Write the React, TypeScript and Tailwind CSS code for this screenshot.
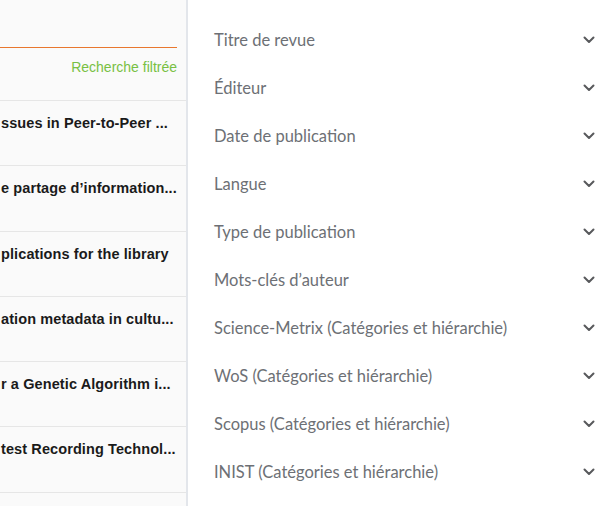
import React from 'react';

const results = [
  'ssues in Peer-to-Peer ...',
  'e partage d’information...',
  'plications for the library',
  'ation metadata in cultu...',
  'r a Genetic Algorithm i...',
  'test Recording Technol...',
];

const filters = [
  'Titre de revue',
  'Éditeur',
  'Date de publication',
  'Langue',
  'Type de publication',
  'Mots-clés d’auteur',
  'Science-Metrix (Catégories et hiérarchie)',
  'WoS (Catégories et hiérarchie)',
  'Scopus (Catégories et hiérarchie)',
  'INIST (Catégories et hiérarchie)',
];

const Chevron = () => (
  <svg width="12" height="8" viewBox="0 0 12 8" fill="none">
    <polyline points="1.5,1.5 6,6 10.5,1.5" stroke="#58595c" strokeWidth="2" strokeLinecap="round" strokeLinejoin="round" />
  </svg>
);

export default function App() {
  return (
    <div className="flex h-[506px] w-[612px] overflow-hidden bg-white">
      <div className="flex w-[188px] shrink-0 flex-col border-r-2 border-[#e3e6eb] bg-[#fafafa] font-['Liberation_Sans',Arial,sans-serif]">
        <div className="h-[101px] shrink-0 border-b border-[#e6e6e6] pr-[9px]">
          <div className="h-[47px]" />
          <div className="h-px bg-[#e8772e]" />
          <div className="pt-[9px] text-right text-[14px] text-[#78c043]">Recherche filtrée</div>
        </div>
        {results.map((title) => (
          <div key={title} className="h-[65.3px] shrink-0 border-b border-[#e6e6e6] pt-[12px]">
            <div className="whitespace-nowrap pl-[1px] text-[14.5px] font-bold tracking-[0.1px] text-[#1a1a1a]">{title}</div>
          </div>
        ))}
      </div>
      <div className="flex flex-1 flex-col pt-[16px] pl-[26px] pr-[17px] font-['Lato',sans-serif]">
        {filters.map((f) => (
          <div key={f} className="flex h-[48px] items-center justify-between text-[16.5px] text-[#6d7075]">
            <span>{f}</span>
            <Chevron />
          </div>
        ))}
      </div>
    </div>
  );
}
